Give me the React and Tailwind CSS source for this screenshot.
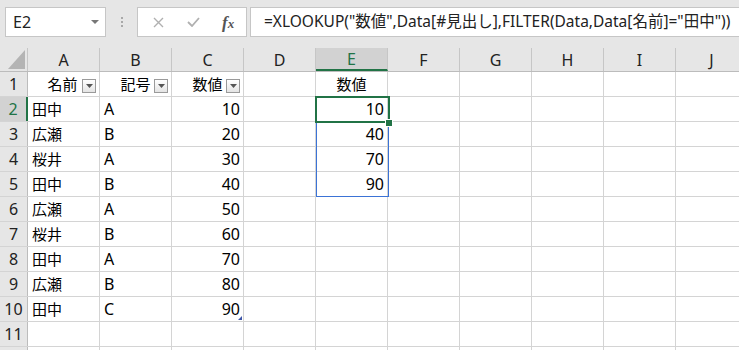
import React from 'react'

const font = 'font-["Noto_Sans","Noto_Sans_CJK_JP",sans-serif]'

const COLS = ['A', 'B', 'C', 'D', 'E', 'F', 'G', 'H', 'I', 'J']

const DATA = [
  ['田中', 'A', 10, 10],
  ['広瀬', 'B', 20, 40],
  ['桜井', 'A', 30, 70],
  ['田中', 'B', 40, 90],
  ['広瀬', 'A', 50],
  ['桜井', 'B', 60],
  ['田中', 'A', 70],
  ['広瀬', 'B', 80],
  ['田中', 'C', 90],
  [],
]

const FilterButton = () => (
  <span className="absolute right-[3px] top-[7px] w-[14px] h-[14px] border border-[#9a9a9a] bg-gradient-to-b from-white to-[#e4e4e4] flex items-center justify-center">
    <svg width="7" height="4" viewBox="0 0 7 4">
      <path d="M0 0h7L3.5 4z" fill="#555" />
    </svg>
  </span>
)

const Toolbar = () => (
  <div className="h-[48px] bg-[#e6e6e6] flex items-start pt-[7px]">
    {/* Name box */}
    <div className="ml-[5px] w-[101px] h-[30px] bg-white border border-[#c6c6c6] flex items-center justify-between pl-[7px] pr-[6px]">
      <span className="text-[16px] text-[#222]">E2</span>
      <svg width="8" height="4" viewBox="0 0 8 4">
        <path d="M0 0h8L4 4z" fill="#777" />
      </svg>
    </div>
    <div className="w-[31px] h-[30px] flex flex-col items-center justify-center gap-[2px]">
      <span className="w-[2px] h-[2px] bg-[#a8a8a8]" />
      <span className="w-[2px] h-[2px] bg-[#a8a8a8]" />
      <span className="w-[2px] h-[2px] bg-[#a8a8a8]" />
    </div>
    {/* Cancel / enter / fx */}
    <div className="w-[110px] h-[30px] bg-white border border-[#c6c6c6] flex items-center">
      <svg className="ml-[15px]" width="11" height="11" viewBox="0 0 11 11">
        <path d="M1 1l9 9M10 1l-9 9" stroke="#b0b0b0" strokeWidth="1.4" />
      </svg>
      <svg className="ml-[23px]" width="13" height="10" viewBox="0 0 13 10">
        <path d="M1 5l4 4 7-8" stroke="#b0b0b0" strokeWidth="1.8" fill="none" />
      </svg>
      <span className="ml-[22px] text-[17px] italic font-bold font-['Liberation_Serif',serif] text-[#555] leading-none">
        f<span className="text-[13px]">x</span>
      </span>
    </div>
    {/* Formula */}
    <div className="ml-[3px] flex-1 h-[30px] bg-white border-y border-l border-[#c6c6c6] flex items-center pl-[13px] overflow-hidden whitespace-nowrap">
      <span className="text-[15.5px] text-[#222]">
        =XLOOKUP("数値",Data[#見出し],FILTER(Data,Data[名前]="田中"))
      </span>
    </div>
  </div>
)

const HeaderRow = () => (
  <div className="flex h-[24px] bg-[#e6e6e6] border-b border-[#bcbcbc]">
    <div className="w-[28px] shrink-0 relative border-r border-[#c6c6c6]">
      <svg className="absolute left-[8px] top-[2px]" width="17" height="19" viewBox="0 0 17 19">
        <path d="M17 0v19H0z" fill="#b4b4b4" />
      </svg>
    </div>
    {COLS.map((c) => (
      <div
        key={c}
        className={`w-[72px] shrink-0 flex items-center justify-center text-[16px] border-r border-[#c6c6c6] ${
          c === 'E' ? 'bg-[#d2d2d2] text-[#217346] border-b-2 border-b-[#217346]' : 'text-[#222]'
        }`}
      >
        {c}
      </div>
    ))}
  </div>
)

const Cell = ({ children, align = 'left', size = 'text-[16px]', className = '' }) => (
  <div
    className={`w-[72px] shrink-0 h-full relative flex items-center border-r border-[#d4d4d4] ${size} text-black ${
      align === 'right' ? 'justify-end pr-[3px]' : align === 'center' ? 'justify-center' : 'pl-[4px]'
    } ${className}`}
  >
    {children}
  </div>
)

const RowHead = ({ n, label = true }) => (
  <div
    className={`w-[28px] shrink-0 h-full flex items-center justify-center text-[16px] ${
      n === 2
        ? 'bg-[#d2d2d2] text-[#217346] border-r-2 border-[#217346]'
        : 'bg-[#e6e6e6] text-[#222] border-r border-[#bcbcbc]'
    }`}
  >
    {label ? n : ''}
  </div>
)

const App = () => {
  return (
    <div className={`w-[739px] h-[350px] overflow-hidden bg-white ${font}`}>
      <Toolbar />
      <div className="relative">
        <HeaderRow />

        {/* row 1: table headers */}
        <div className="flex h-[25px] border-b border-[#d4d4d4]">
          <RowHead n={1} />
          <Cell align="center" size="text-[15px]">
            <span className="pr-[2px]">名前</span>
            <FilterButton />
          </Cell>
          <Cell align="center" size="text-[15px]">
            <span>記号</span>
            <FilterButton />
          </Cell>
          <Cell align="center" size="text-[15px]">
            <span>数値</span>
            <FilterButton />
          </Cell>
          <Cell />
          <Cell align="center" size="text-[15px]">数値</Cell>
          {COLS.slice(5).map((c) => (
            <Cell key={c} />
          ))}
        </div>

        {DATA.map((r, i) => (
          <div key={i} className="flex h-[25px] border-b border-[#d4d4d4]">
            <RowHead n={i + 2} />
            <Cell size="text-[15px]">{r[0]}</Cell>
            <Cell>{r[1]}</Cell>
            <Cell align="right">
              {r[2]}
              {i === 8 && (
                <svg className="absolute right-[1px] bottom-[1px]" width="4" height="4" viewBox="0 0 4 4">
                  <path d="M4 0v4H0z" fill="#3d55a8" />
                </svg>
              )}
            </Cell>
            <Cell />
            <Cell align="right">{r[3]}</Cell>
            {COLS.slice(5).map((c) => (
              <Cell key={c} />
            ))}
          </div>
        ))}

        {/* row 12, only its top edge is in view */}
        <div className="flex h-[25px]">
          <RowHead n={12} label={false} />
          {COLS.map((c) => (
            <Cell key={c} />
          ))}
        </div>

        {/* spill range outline E2:E5 */}
        <div className="absolute left-[316px] top-[48px] w-[73px] h-[101px] border border-[#3b73d6] pointer-events-none" />
        {/* active cell E2 */}
        <div className="absolute left-[315px] top-[48px] w-[75px] h-[27px] border-2 border-[#217346] pointer-events-none" />
        <div className="absolute left-[386px] top-[72px] w-[6px] h-[6px] bg-[#217346] border border-white box-content -translate-x-[1px] -translate-y-[1px]" />
      </div>
    </div>
  )
}

export default App
